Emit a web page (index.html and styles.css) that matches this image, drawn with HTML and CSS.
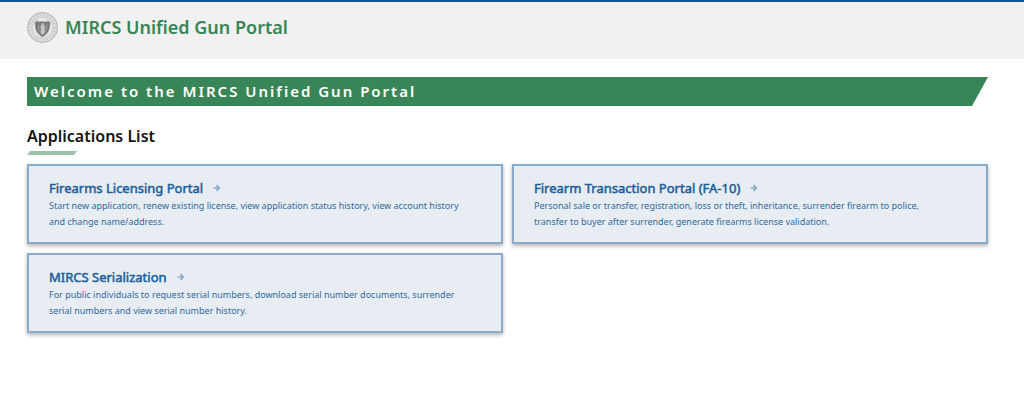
FILE: index.html
```html
<!DOCTYPE html>
<html lang="en">
<head>
    <meta charset="UTF-8">
    <meta name="viewport" content="width=device-width, initial-scale=1.0">
    <title>MIRCS Unified Gun Portal</title>
    <link rel="stylesheet" href="styles.css">
</head>
<body>
    <header class="site-header">
        <svg class="seal" viewBox="0 0 62 62" aria-hidden="true">
            <circle cx="31" cy="31" r="30" fill="#dedede" stroke="#b0b0b0" stroke-width="2"/>
            <circle cx="31" cy="31" r="25" fill="none" stroke="#cacaca" stroke-width="5" stroke-dasharray="3 4"/>
            <circle cx="31" cy="31" r="21" fill="#e6e6e6" stroke="#bcbcbc" stroke-width="1"/>
            <path d="M14 21l6-5 5 3h12l5-3 6 5-2 5c0 11-5 19-15 25-10-6-15-14-15-25z" fill="#b2b2b2"/>
            <path d="M18 21c4 1 9 0 13-1 4 1 9 2 13 1 1 13-3 22-13 27-10-5-14-14-13-27z" fill="#808080" stroke="#6a6a6a" stroke-width="2"/>
            <path d="M30 22h3l1 5 3 3-2 2 1 9-3 4h-4l-2-4 1-9-2-2 3-3z" fill="#c4c4c4"/>
            <path d="M23 25v9l4 8M39 25v9l-4 8" fill="none" stroke="#999" stroke-width="2"/>
        </svg>
        <span class="site-title">MIRCS Unified Gun Portal</span>
    </header>
    <main class="content">
        <h1 class="banner">Welcome to the MIRCS Unified Gun Portal</h1>
        <h2 class="section-title">Applications List</h2>
        <div class="app-list">
            <a class="app-card" href="#">
                <h3 class="app-name">Firearms Licensing Portal
                    <svg class="arrow" viewBox="0 0 14 14" aria-hidden="true"><path d="M1 7h10M6 2l5 5-5 5"/></svg>
                </h3>
                <p class="app-text">Start new application, renew existing license, view application status history, view account history and change name/address.</p>
            </a>
            <a class="app-card" href="#">
                <h3 class="app-name">Firearm Transaction Portal (FA-10)
                    <svg class="arrow" viewBox="0 0 14 14" aria-hidden="true"><path d="M1 7h10M6 2l5 5-5 5"/></svg>
                </h3>
                <p class="app-text">Personal sale or transfer, registration, loss or theft, inheritance, surrender firearm to police, transfer to buyer after surrender, generate firearms license validation.</p>
            </a>
            <a class="app-card" href="#">
                <h3 class="app-name">MIRCS Serialization
                    <svg class="arrow" viewBox="0 0 14 14" aria-hidden="true"><path d="M1 7h10M6 2l5 5-5 5"/></svg>
                </h3>
                <p class="app-text">For public individuals to request serial numbers, download serial number documents, surrender serial numbers and view serial number history.</p>
            </a>
        </div>
    </main>
</body>
</html>
```
FILE: styles.css
```css
body {
    margin: 0;
    font-family: "Noto Sans", sans-serif;
    color: #141414;
    background-color: #fff;
}
.site-header {
    display: flex;
    align-items: center;
    gap: 7px;
    padding: 9px 27px 16px;
    background-color: #f1f1f1;
    border-top: 2px solid #14558f;
}
.seal {
    width: 31px;
    height: 31px;
}
.site-title {
    font-size: 18px;
    line-height: 32px;
    font-weight: 600;
    color: #388557;
}
.content {
    padding: 18px 36px 36px 27px;
}
.banner {
    margin: 0;
    padding: 0 7px;
    font-size: 15px;
    line-height: 29px;
    font-weight: 600;
    letter-spacing: 2px;
    color: #fff;
    background-color: #388557;
    clip-path: polygon(0 0, 100% 0, calc(100% - 16px) 100%, 0 100%);
}
.section-title {
    margin: 18px 0 9px;
    font-size: 16px;
    line-height: 24px;
    font-weight: 600;
}
.section-title::after {
    content: "";
    display: block;
    width: 50px;
    height: 4px;
    margin-top: 3px;
    background-color: #9bc4aa;
    clip-path: polygon(3px 0, 100% 0, calc(100% - 3px) 100%, 0 100%);
}
.app-list {
    display: grid;
    grid-template-columns: 1fr 1fr;
    gap: 9px;
}
.app-card {
    padding: 12px 34px 12px 20px;
    color: #1d5f99;
    text-decoration: none;
    background-color: #e8edf4;
    border: 2px solid #8aabcb;
    box-shadow: 0 2px 4px rgba(0, 0, 0, 0.3);
}
.app-name {
    display: flex;
    align-items: center;
    gap: 10px;
    margin: 0;
    font-size: 13px;
    line-height: 20px;
    font-weight: 400;
    -webkit-text-stroke: 0.04em currentColor;
}
.arrow {
    width: 8px;
    height: 8px;
    fill: none;
    stroke: #8aabcb;
    stroke-width: 3;
}
.app-text {
    margin: 0;
    font-size: 9px;
    line-height: 16px;
    color: #2f6b9a;
}
```
